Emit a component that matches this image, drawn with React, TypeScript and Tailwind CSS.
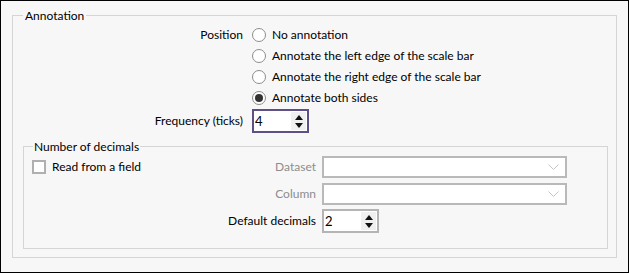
import React from "react";

const Radio = ({ label, checked }: { label: string; checked?: boolean }) => (
  <label className="flex items-center h-[21px] gap-[6px]">
    <span className="w-[14px] h-[14px] rounded-full border-[1.5px] border-[#8c8c8c] bg-white flex items-center justify-center">
      {checked && <span className="w-[8px] h-[8px] rounded-full bg-[#333333]" />}
    </span>
    <span>{label}</span>
  </label>
);

const Spin = ({ value, focused }: { value: string; focused?: boolean }) => (
  <div
    className={`w-[57px] h-[24px] bg-white border-2 flex items-stretch ${
      focused ? "border-[#5e4f86]" : "border-[#b4b4b4]"
    }`}
  >
    <span className="flex-1 pl-[1px] leading-[20px] text-[13px]">{value}</span>
    <span className="w-[15px] my-[1px] mr-[1px] bg-[#f0f0f0] flex flex-col items-center justify-center gap-[3px]">
      <svg width="8" height="5" viewBox="0 0 8 5">
        <path d="M0 5 L4 0 L8 5 Z" fill="#111" />
      </svg>
      <svg width="8" height="5" viewBox="0 0 8 5">
        <path d="M0 0 L4 5 L8 0 Z" fill="#111" />
      </svg>
    </span>
  </div>
);

const Combo = () => (
  <div className="w-[245px] h-[22px] bg-white border-2 border-[#b9b9b9] flex items-center justify-end pr-[6px]">
    <svg width="11" height="6" viewBox="0 0 11 6">
      <path d="M0.5 0.5 L5.5 5.5 L10.5 0.5" fill="none" stroke="#c4c4c4" strokeWidth="1" />
    </svg>
  </div>
);

export default function App() {
  return (
    <div
      className="w-[629px] h-[273px] border border-black bg-[#f7f7f7] text-[12px] text-black pt-[6px] px-[11px]"
      style={{ fontFamily: 'Lato, "Noto Sans", sans-serif' }}
    >
      <fieldset className="w-[605px] h-[251px] border border-[#d5d5d5]">
        <legend className="ml-[10px] px-[2px] leading-[17px]">Annotation</legend>
        <div className="grid grid-cols-[230px_auto] gap-x-[9px]">
          <div className="text-right h-[21px] leading-[21px]">Position</div>
          <div className="flex flex-col">
            <Radio label="No annotation" />
            <Radio label="Annotate the left edge of the scale bar" />
            <Radio label="Annotate the right edge of the scale bar" />
            <Radio label="Annotate both sides" checked />
          </div>
          <div className="text-right leading-[24px] mt-[1px]">Frequency (ticks)</div>
          <div className="mt-[1px]">
            <Spin value="4" focused />
          </div>
        </div>
        <fieldset className="ml-[10px] mt-[5px] w-[585px] h-[111px] border border-[#d5d5d5]">
          <legend className="ml-[9px] px-[1px] leading-[17px]">Number of decimals</legend>
          <div className="grid grid-cols-[284px_245px] gap-x-[6px] gap-y-[5px] pl-[8px] pt-[1px]">
            <div className="flex items-center justify-between h-[22px]">
              <label className="flex items-center gap-[6px]">
                <span className="w-[14px] h-[14px] border-2 border-[#b0b0b0] bg-white" />
                <span>Read from a field</span>
              </label>
              <span className="text-[#8d8d8d]">Dataset</span>
            </div>
            <Combo />
            <div className="flex items-center justify-end h-[22px] text-[#8d8d8d]">Column</div>
            <Combo />
            <div className="flex items-center justify-end h-[24px] -mt-[1px]">Default decimals</div>
            <div className="-mt-[1px]">
              <Spin value="2" />
            </div>
          </div>
        </fieldset>
      </fieldset>
    </div>
  );
}
